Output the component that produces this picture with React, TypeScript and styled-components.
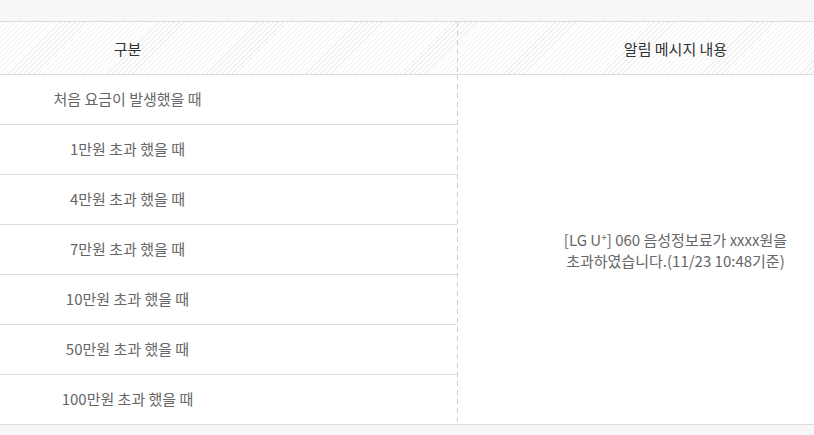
import React from "react";
import styled, { createGlobalStyle } from "styled-components";

const GlobalStyle = createGlobalStyle`
  html, body {
    margin: 0;
    padding: 0;
    background: #f7f7f7;
    overflow: hidden;
  }
  body {
    font-family: "Noto Sans CJK KR", "Noto Sans", sans-serif;
  }
`;

const Page = styled.div`
  width: 814px;
  height: 435px;
  padding-top: 21px;
  box-sizing: border-box;
  overflow: hidden;
`;

const Table = styled.div`
  width: 1096px;
  margin-left: -202px;
  background: #fff;
  border-top: 1px solid #dcdcdc;
  border-bottom: 1px solid #dcdcdc;
`;

const dashed = `
  background-image: repeating-linear-gradient(
    to bottom,
    #cfcfcf 0px,
    #cfcfcf 5px,
    transparent 5px,
    transparent 9px
  );
  background-size: 1px 100%;
  background-repeat: no-repeat;
  background-position: left top;
`;

const HeadRow = styled.div`
  display: grid;
  grid-template-columns: 659px 1fr;
  height: 52px;
  border-bottom: 1px solid #dcdcdc;
  background: repeating-linear-gradient(
    -45deg,
    #ffffff 0px,
    #ffffff 2.6px,
    #efefef 2.6px,
    #efefef 3.5px
  );
`;

const HeadCell = styled.div<{ $divider?: boolean }>`
  display: flex;
  align-items: center;
  justify-content: center;
  font-size: 15px;
  color: #333;
  position: relative;
  ${(p) =>
    p.$divider &&
    `
    &::before {
      content: "";
      position: absolute;
      left: 0; top: 0; bottom: 0;
      width: 1px;
      ${dashed}
    }
  `}
`;

const Body = styled.div`
  display: grid;
  grid-template-columns: 659px 1fr;
`;

const LeftCol = styled.div`
  display: flex;
  flex-direction: column;
`;

const Row = styled.div`
  height: 49px;
  display: flex;
  align-items: center;
  justify-content: center;
  font-size: 15px;
  line-height: 21px;
  padding-bottom: 2px;
  box-sizing: border-box;
  color: #666;
  & + & {
    border-top: 1px solid #dcdcdc;
    height: 50px;
  }
`;

const MessageCell = styled.div`
  display: flex;
  align-items: center;
  justify-content: center;
  text-align: center;
  font-size: 15px;
  line-height: 21px;
  color: #666;
  ${dashed}
`;

const Message = styled.p`
  margin: 0;
`;

const Sup = styled.sup`
  font-size: 10px;
  line-height: 0;
  vertical-align: 5px;
`;

const rows = [
  "처음 요금이 발생했을 때",
  "1만원 초과 했을 때",
  "4만원 초과 했을 때",
  "7만원 초과 했을 때",
  "10만원 초과 했을 때",
  "50만원 초과 했을 때",
  "100만원 초과 했을 때",
];

export default function App() {
  return (
    <>
      <GlobalStyle />
      <Page>
        <Table>
          <HeadRow>
            <HeadCell>구분</HeadCell>
            <HeadCell $divider>알림 메시지 내용</HeadCell>
          </HeadRow>
          <Body>
            <LeftCol>
              {rows.map((r) => (
                <Row key={r}>{r}</Row>
              ))}
            </LeftCol>
            <MessageCell>
              <Message>
                [LG U<Sup>+</Sup>] 060 음성정보료가 xxxx원을
                <br />
                초과하였습니다.(11/23 10:48기준)
              </Message>
            </MessageCell>
          </Body>
        </Table>
      </Page>
    </>
  );
}
